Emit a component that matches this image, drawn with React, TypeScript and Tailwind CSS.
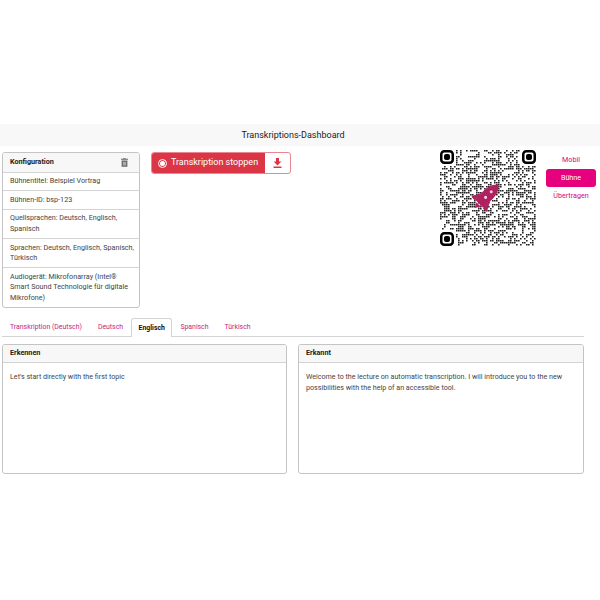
import React from 'react';

// QR drawing, modules come from a small seeded generator
const SIZE = 48;
const CELL = 2;

const inFinder = (x: number, y: number) =>
  (x < 8 && y < 8) || (x >= SIZE - 8 && y < 8) || (x < 8 && y >= SIZE - 8);

const buildModules = () => {
  const cells: [number, number][] = [];
  let seed = 9137;
  for (let y = 0; y < SIZE; y++) {
    for (let x = 0; x < SIZE; x++) {
      seed = (seed * 1103515245 + 12345) & 0x7fffffff;
      if (inFinder(x, y)) continue;
      if ((seed >> 12) % 100 < 50) cells.push([x, y]);
    }
  }
  return cells;
};

const Finder = ({ x, y }: { x: number; y: number }) => (
  <g>
    <rect x={x + 1.25} y={y + 1.25} width={11.5} height={11.5} rx={3} fill="none" stroke="#000" strokeWidth={2.5} />
    <rect x={x + 4} y={y + 4} width={6} height={6} rx={2} fill="#000" />
  </g>
);

const QrCode = () => (
  <svg width={96} height={96} viewBox="0 0 96 96" className="block">
    <path
      d={buildModules().map(([x, y]) => `M${x * CELL} ${y * CELL}h1.6v1.6h-1.6z`).join('')}
      fill="#222"
    />
    <Finder x={0} y={0} />
    <Finder x={82} y={0} />
    <Finder x={0} y={82} />
    <g transform="rotate(45 47 46)">
      <path d="M47 30c5 4 6 10 6 15v12H41V45c0-5 1-11 6-15z" fill="#b0215f" />
      <path d="M41 48l-5 9 5 1zM53 48l5 9-5 1z" fill="#b0215f" />
      <path d="M44 58h6l-3 5z" fill="#b0215f" />
      <circle cx={47} cy={40} r={1.5} fill="#f3d5e2" />
      <circle cx={47} cy={48} r={1.5} fill="#f3d5e2" />
    </g>
  </svg>
);

const TrashIcon = () => (
  <svg width={7} height={9} viewBox="0 0 9 11" className="mr-[4px]">
    <path d="M3 0h3l.5.7H9v1.3H0V.7h2.5zM.8 2.8h7.4V11H.8z" fill="#666" />
    <path d="M2.4 4.4h4.2v5H2.4z" fill="#aaa" />
  </svg>
);

const DownloadIcon = () => (
  <svg width={9} height={10} viewBox="0 0 9 10">
    <path d="M3 0h3v3.6h2.4L4.5 7.4.6 3.6H3zM.5 8.4h8V10h-8z" fill="#dc3545" />
  </svg>
);

const configRows = [
  'Bühnentitel: Beispiel Vortrag',
  'Bühnen-ID: bsp-123',
  'Quellsprachen: Deutsch, Englisch, Spanisch',
  'Sprachen: Deutsch, Englisch, Spanisch, Türkisch',
  'Audiogerät: Mikrofonarray (Intel® Smart Sound Technologie für digitale Mikrofone)',
];

const tabs = ['Transkription (Deutsch)', 'Deutsch', 'Englisch', 'Spanisch', 'Türkisch'];

const TextCard = ({ title, text, className }: { title: string; text: string; className: string }) => (
  <div className={`${className} h-[130px] border border-[#c4c4c4] rounded-[3px] overflow-hidden`}>
    <div className="h-[18px] bg-[#f7f7f7] border-b border-[#d4d4d4] px-[7px] flex items-center font-bold text-[#222] text-[7.2px]">
      {title}
    </div>
    <div className="px-[7px] pt-[9px] text-[7.15px] leading-[10.5px] text-[#444]">{text}</div>
  </div>
);

export default function App() {
  return (
    <div className="w-[600px] h-[600px] bg-white pt-[124px] font-['Roboto','Noto_Sans',sans-serif] overflow-hidden">
      <div className="h-[22px] bg-[#f8f8f8] flex items-center justify-center pr-[14px] pt-[2px] text-[9px] text-[#222]">
        Transkriptions-Dashboard
      </div>

      <div className="flex items-start mt-[6px] pl-[2px] h-[155px]">
        {/* Configuration */}
        <div className="w-[138px] border border-[#c4c4c4] rounded-[3px] overflow-hidden text-[7.2px] leading-[10.7px] text-[#444]">
          <div className="h-[19px] bg-[#f7f7f7] flex items-center justify-between px-[7px] font-bold text-[#222]">
            Konfiguration
            <TrashIcon />
          </div>
          {configRows.map(row => (
            <div key={row} className="border-t border-[#d4d4d4] pl-[7px] pr-[3px] py-[3.4px]">
              {row}
            </div>
          ))}
        </div>

        {/* Actions */}
        <div className="ml-[11px] flex h-[22px] w-[140px] rounded-[3px] overflow-hidden border border-[#dc3545]/60">
          <button className="w-[114px] -my-px -ml-px bg-[#dc3545] text-white text-[9px] flex items-center justify-center gap-[4px]">
            <span className="w-[9px] h-[9px] rounded-full border border-white flex items-center justify-center">
              <span className="w-[5px] h-[5px] rounded-full bg-white" />
            </span>
            Transkription stoppen
          </button>
          <button className="flex-1 flex items-center justify-center">
            <DownloadIcon />
          </button>
        </div>

        {/* QR */}
        <div className="ml-[149px] -mt-[2px]">
          <QrCode />
        </div>

        {/* Target nav */}
        <div className="ml-[10px] w-[50px] flex flex-col text-[7.2px] text-center text-[#d6057f]">
          <div className="h-[17px] flex items-center justify-center">Mobil</div>
          <div className="h-[18px] flex items-center justify-center bg-[#e6007e] text-white rounded-[3px]">Bühne</div>
          <div className="h-[18px] flex items-center justify-center">Übertragen</div>
        </div>
      </div>

      {/* Tabs */}
      <div className="mt-[11px] ml-[2px] w-[582px] h-[19px] border-b border-[#d4d4d4] flex items-end text-[6.9px] text-[#c2277f]">
        {tabs.map(tab => (
          <div
            key={tab}
            className={
              tab === 'Englisch'
                ? 'h-[19px] -mb-px px-[6.5px] pt-[1px] flex items-center font-bold text-[#111] bg-white border border-b-0 border-[#d4d4d4] rounded-t-[3px]'
                : 'h-[18px] px-[8px] pt-[1px] flex items-center'
            }
          >
            {tab}
          </div>
        ))}
      </div>

      {/* Text panels */}
      <div className="mt-[7px] ml-[2px] w-[582px] flex gap-[11px]">
        <TextCard className="w-[285px]" title="Erkennen" text="Let's start directly with the first topic" />
        <TextCard
          className="flex-1"
          title="Erkannt"
          text="Welcome to the lecture on automatic transcription. I will introduce you to the new possibilities with the help of an accessible tool."
        />
      </div>
    </div>
  );
}
